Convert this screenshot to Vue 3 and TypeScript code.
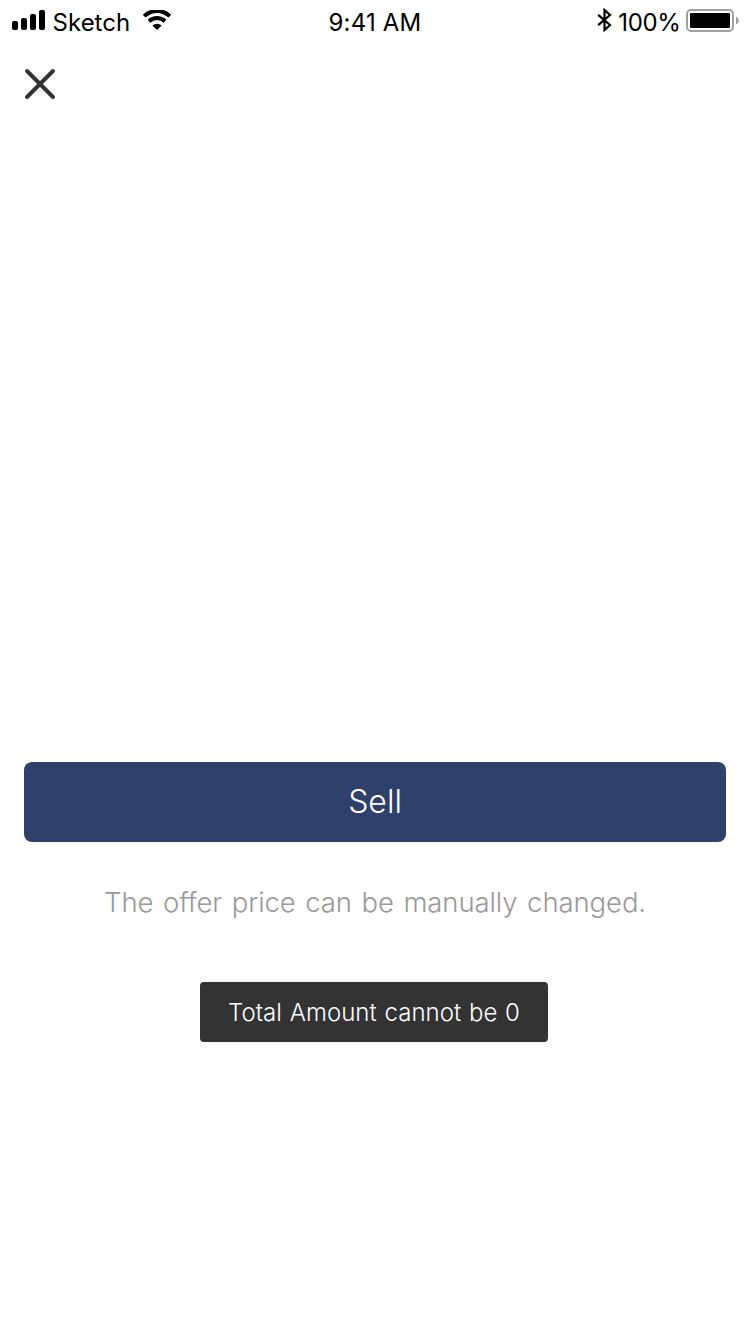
<script setup lang="ts">
import { ref } from 'vue'

const carrier = ref('Sketch')
const time = ref('9:41 AM')
const battery = ref('100%')
const hint = ref('The offer price can be manually changed.')
const toast = ref('Total Amount cannot be 0')
</script>

<template>
  <main class="screen">
    <header class="status">
      <div class="side">
        <svg class="signal" width="34" height="20" viewBox="0 0 34 20">
          <rect x="0" y="11" width="6" height="9" rx="2" />
          <rect x="9" y="8" width="6" height="12" rx="2" />
          <rect x="18" y="4" width="6" height="16" rx="2" />
          <rect x="27" y="0" width="6" height="20" rx="2" />
        </svg>
        <span class="carrier">{{ carrier }}</span>
        <svg class="wifi" width="28" height="20" viewBox="0 0 28 20">
          <path class="arc" d="M1.2 6.2A18.2 18.2 0 0 1 26.8 6.2" />
          <path class="arc" d="M6 11.2A11.6 11.6 0 0 1 22 11.2" />
          <path d="M14 20L9.4 15.6A6.6 6.6 0 0 1 18.6 15.6Z" />
        </svg>
      </div>
      <span class="time">{{ time }}</span>
      <div class="side right">
        <svg class="bluetooth" width="16" height="24" viewBox="0 0 16 24">
          <path d="M1.2 6.8L13 17L7.5 22V2L13 7L1.2 17.2" />
        </svg>
        <span class="percent">{{ battery }}</span>
        <svg class="battery" width="53" height="24" viewBox="0 0 53 24">
          <rect class="shell" x="1" y="1" width="46" height="21" rx="4" />
          <rect x="4" y="4" width="40" height="15" rx="1" />
          <path class="cap" d="M50 7.5Q52.8 9 52.8 11.5T50 15.5Z" />
        </svg>
      </div>
    </header>
    <button class="close" aria-label="Close">
      <svg width="32" height="32" viewBox="0 0 32 32">
        <path d="M3 3L29 29M29 3L3 29" />
      </svg>
    </button>
    <section class="actions">
      <button class="sell">Sell</button>
      <p class="hint"><span>{{ hint }}</span></p>
      <div class="toast" role="status"><span>{{ toast }}</span></div>
    </section>
  </main>
</template>

<style>
body {
  background: #fff;
}
</style>

<style scoped>
.screen {
  box-sizing: border-box;
  width: 750px;
  height: 1334px;
  display: flex;
  flex-direction: column;
  overflow: hidden;
  background: #fff;
  font-family: Inter, "Liberation Sans", sans-serif;
}
button {
  border: 0;
  padding: 0;
  font: inherit;
}
.status {
  display: grid;
  grid-template-columns: 1fr auto 1fr;
  height: 40px;
  font-size: 24px;
  line-height: 28px;
  color: #000;
}
.side {
  display: flex;
  align-items: flex-start;
  padding-left: 12px;
}
.right {
  justify-content: flex-end;
  padding: 0 11px 0 0;
}
.signal {
  margin-top: 10px;
}
.carrier {
  margin: 9px 0 0 6.6px;
}
.wifi {
  margin: 10px 0 0 12.4px;
}
.arc {
  fill: none;
  stroke: #000;
  stroke-width: 4;
}
.time,
.percent {
  margin-top: 9px;
}
.time {
  letter-spacing: 0.2px;
}
.percent {
  letter-spacing: -0.3px;
}
.bluetooth {
  margin: 8px 5.5px 0 0;
  fill: none;
  stroke: #000;
  stroke-width: 2.2;
}
.battery {
  margin: 9px 0 0 5.4px;
}
.shell {
  fill: none;
  stroke: #a0a0a0;
  stroke-width: 2;
}
.cap {
  fill: #a0a0a0;
}
.close {
  display: flex;
  width: 32px;
  height: 32px;
  margin: 28px 0 0 24px;
  background: none;
}
.close path {
  fill: none;
  stroke: #333;
  stroke-width: 4;
  stroke-linecap: round;
}
.actions {
  display: flex;
  flex-direction: column;
  align-items: center;
  margin: 662px 24px 0;
}
.sell {
  align-self: stretch;
  height: 80px;
  border-radius: 8px;
  background: #2f406b;
  color: #fff;
  font-size: 32px;
  font-weight: 300;
  line-height: 78px;
}
.hint {
  margin: 40px 0 0;
  height: 40px;
  line-height: 40px;
  font-size: 27.5px;
  font-weight: 350;
  letter-spacing: -0.1px;
  word-spacing: 2px;
  color: #999;
  white-space: nowrap;
}
.toast {
  width: 348px;
  height: 60px;
  margin: 60px 2px 0 0;
  border-radius: 4px;
  background: #333;
  color: #fff;
  font-size: 24px;
  font-weight: 300;
  letter-spacing: 0.05px;
  word-spacing: 0.9px;
  line-height: 61px;
  text-align: center;
  white-space: nowrap;
}
</style>
